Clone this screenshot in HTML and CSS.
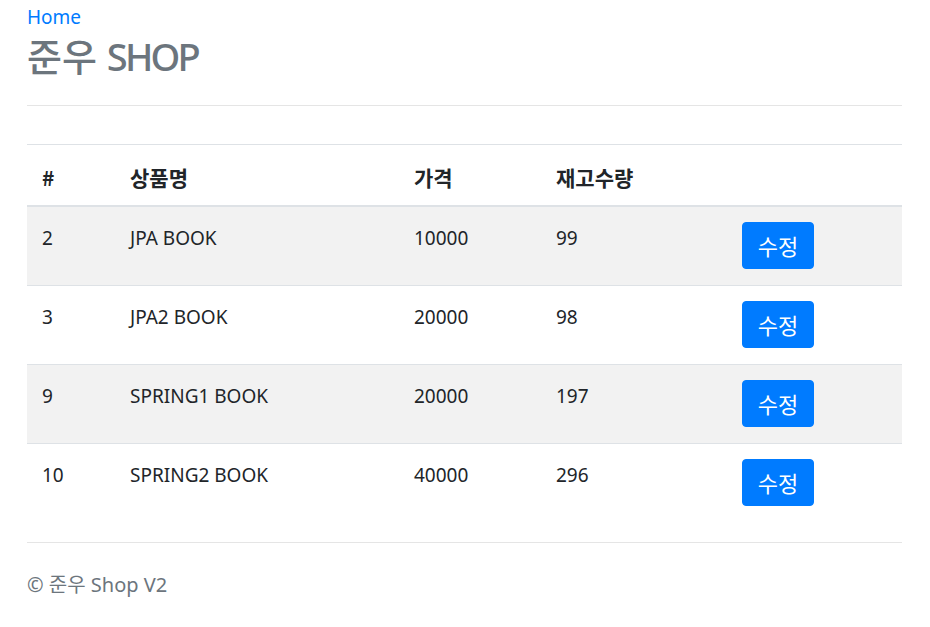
FILE: index.html
```html
<!DOCTYPE html>
<html lang="ko">
<head>
<meta charset="utf-8">
<title>준우 SHOP</title>
<link rel="stylesheet" href="styles.css">
</head>
<body>
<div class="container">
  <header class="header">
    <a class="home" href="#">Home</a>
    <h1 class="title">준우 <span class="latin">SHOP</span></h1>
  </header>
  <hr class="rule">
  <table class="table">
    <thead>
      <tr>
        <th class="c1">#</th>
        <th class="c2">상품명</th>
        <th class="c3">가격</th>
        <th class="c4">재고수량</th>
        <th class="c5"></th>
      </tr>
    </thead>
    <tbody>
      <tr class="odd"><td>2</td><td>JPA BOOK</td><td>10000</td><td>99</td><td><a class="btn" href="#">수정</a></td></tr>
      <tr><td>3</td><td>JPA2 BOOK</td><td>20000</td><td>98</td><td><a class="btn" href="#">수정</a></td></tr>
      <tr class="odd"><td>9</td><td>SPRING1 BOOK</td><td>20000</td><td>197</td><td><a class="btn" href="#">수정</a></td></tr>
      <tr><td>10</td><td>SPRING2 BOOK</td><td>40000</td><td>296</td><td><a class="btn" href="#">수정</a></td></tr>
    </tbody>
  </table>
  <footer class="footer">
    <p class="copy">© 준우 Shop V2</p>
  </footer>
</div>
</body>
</html>
```
FILE: styles.css
```css
* { box-sizing: border-box; }
html, body { margin: 0; padding: 0; background: #fff; }
body {
  font-family: "Noto Sans", "Noto Sans CJK KR", sans-serif;
  color: #212529;
}
.container {
  width: 875px;
  margin-left: 27px;
}
.header { padding-top: 2px; }
.home {
  display: block;
  font-size: 19px;
  line-height: 30px;
  color: #007bff;
  text-decoration: none;
}
.title {
  margin: 0;
  font-size: 38px;
  line-height: 48px;
  font-weight: 500;
  color: #6c757d;
  padding-bottom: 25px;
}
.title .latin { letter-spacing: -2.8px; }
.rule {
  margin: 0;
  border: 0;
  border-top: 1px solid #e5e5e5;
}
.table {
  width: 875px;
  margin-top: 38px;
  border-collapse: collapse;
  font-size: 19px;
  line-height: 33px;
}
.table th, .table td {
  text-align: left;
  vertical-align: top;
  padding: 15px 15px 16px;
  border-top: 1px solid #dee2e6;
}
.table th {
  font-weight: 700;
  padding: 16px 15px 11px;
  border-bottom: 2px solid #dee2e6;
  font-family: "Noto Sans CJK KR", "Noto Sans", sans-serif;
  font-size: 21px;
}
.c1 { width: 88px; }
.c2 { width: 284px; }
.c3 { width: 142px; }
.c4 { width: 186px; }
.c5 { width: 175px; }
.odd td { background: #f2f2f2; }
.btn {
  display: inline-block;
  vertical-align: top;
  width: 72px;
  text-align: center;
  padding: 8px 0;
  font-size: 22px;
  line-height: 29px;
  color: #fff;
  background: #007bff;
  border: 1px solid #007bff;
  border-radius: 4px;
  text-decoration: none;
  font-family: "Noto Sans CJK KR", sans-serif;
}
.footer {
  margin-top: 20px;
  border-top: 1px solid #e5e5e5;
}
.copy {
  margin: 0;
  padding-top: 27px;
  font-size: 20px;
  line-height: 30px;
  color: #6c757d;
}
```
